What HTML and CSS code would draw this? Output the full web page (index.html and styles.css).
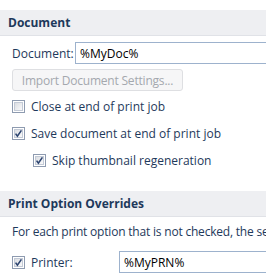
FILE: index.html
```html
<!DOCTYPE html>
<html>
<head>
  <title>Print Settings</title>
  <link rel="stylesheet" href="styles.css">
</head>
<body>

  <div class="section-header first">Document</div>
  <div class="section-body">
    <div class="field-row">
      <span class="field-label">Document:</span>
      <input class="text-input" type="text" value="%MyDoc%">
    </div>
    <button class="import-btn" disabled>Import Document Settings...</button>

    <label class="check-row">
      <span class="check"></span>Close at end of print job
    </label>
    <label class="check-row">
      <span class="check checked"></span>Save document at end of print job
    </label>
    <label class="check-row nested">
      <span class="check checked"></span>Skip thumbnail regeneration
    </label>
  </div>

  <div class="section-header second">Print Option Overrides</div>
  <div class="section-body">
    <p class="note">For each print option that is not checked, the settings in the document are used.</p>
    <div class="field-row printer-row">
      <label class="check-row inline">
        <span class="check checked"></span>Printer:
      </label>
      <input class="text-input" type="text" value="%MyPRN%">
    </div>
  </div>

  <svg width="0" height="0" style="position:absolute">
    <defs>
      <linearGradient id="boxFill" x1="0" y1="0" x2="1" y2="1">
        <stop offset="0" stop-color="#d9dce1"/>
        <stop offset="1" stop-color="#fbfbfc"/>
      </linearGradient>
    </defs>
  </svg>

  <script>
    // Draw the checkbox glyphs
    const boxSvg = checked => `
      <svg width="13" height="13" viewBox="0 0 13 13">
        <rect x="0.5" y="0.5" width="12" height="12" fill="#fff" stroke="#8e9bb0"/>
        <rect x="2.5" y="2.5" width="8" height="8" fill="url(#boxFill)" stroke="#c3cad6"/>
        ${checked ? '<path d="M3.6 6.6 L5.4 9.2 L9.4 3.4" fill="none" stroke="#2c4470" stroke-width="1.6"/>' : ''}
      </svg>`;

    document.querySelectorAll('.check').forEach(box => {
      box.innerHTML = boxSvg(box.classList.contains('checked'));
    });
  </script>
</body>
</html>
```

FILE: styles.css
```css
body {
  margin: 0;
  background-color: #fff;
  font-family: "Open Sans", "Noto Sans", sans-serif;
  font-size: 12px;
  color: #1e395b;
  overflow: hidden;
}
.section-header {
  height: 26px;
  line-height: 26px;
  padding-left: 8px;
  background-color: #eeeff2;
  border-bottom: 1px solid #e0e2e7;
  font-weight: bold;
  box-sizing: border-box;
}
.section-header.first {
  margin-top: 10px;
}
.section-header.second {
  margin-top: 17px;
}
.section-body {
  padding: 6px 0 0 12px;
  display: flex;
  flex-direction: column;
}
.field-row {
  display: flex;
  align-items: center;
  height: 22px;
}
.field-label {
  width: 63px;
  flex-shrink: 0;
}
.text-input {
  flex: 1;
  min-width: 0;
  height: 22px;
  box-sizing: border-box;
  border: 1px solid #9db2cd;
  border-right: none;
  padding: 0 4px;
  font-family: inherit;
  font-size: 12px;
  color: #000;
  outline: none;
}
.import-btn {
  align-self: flex-start;
  margin-top: 5px;
  width: 171px;
  height: 22px;
  border: 1px solid #dedfe2;
  border-radius: 3px;
  background-color: #f6f6f7;
  font-family: inherit;
  font-size: 12px;
  letter-spacing: -0.2px;
  color: #a4a8ae;
  padding: 0;
}
.check-row {
  display: flex;
  align-items: center;
  height: 27px;
}
.section-body > .check-row:first-of-type {
  margin-top: 2px;
}
.check-row.nested {
  padding-left: 21px;
}
.check {
  width: 13px;
  height: 13px;
  margin-right: 6px;
  display: inline-block;
  flex-shrink: 0;
}
.check svg {
  display: block;
}
.note {
  margin: 0;
  height: 18px;
  line-height: 18px;
  white-space: nowrap;
  letter-spacing: -0.2px;
}
.printer-row {
  margin-top: 10px;
}
.printer-row .check-row.inline {
  width: 107px;
  height: 22px;
  flex-shrink: 0;
}
```
